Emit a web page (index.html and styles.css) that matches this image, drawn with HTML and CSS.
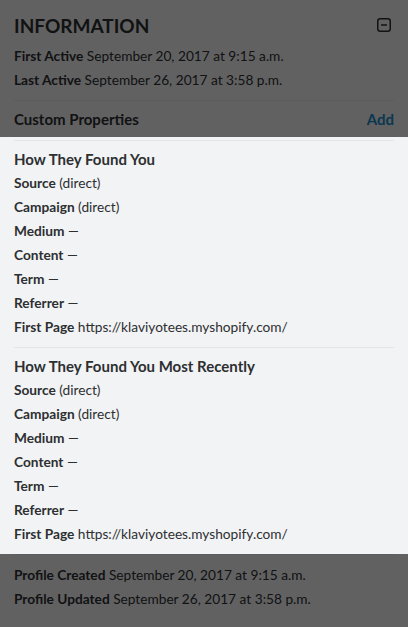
FILE: index.html
```html
<!DOCTYPE html>
<html>
<head>
<meta charset="utf-8">
<link rel="stylesheet" href="styles.css">
</head>
<body>
<div class="panel">
  <section class="block dim">
    <header class="head">
      <h2 class="title">INFORMATION</h2>
      <svg class="collapse" width="14" height="14" viewBox="0 0 14 14" aria-hidden="true">
        <rect x="0.75" y="0.75" width="12.5" height="12.5" rx="2.5" fill="none" stroke="#2d2f31" stroke-width="1.5"/>
        <line x1="4" y1="7" x2="10" y2="7" stroke="#2d2f31" stroke-width="1.5"/>
      </svg>
    </header>
    <div class="row"><b>First Active</b> September 20, 2017 at 9:15 a.m.</div>
    <div class="row"><b>Last Active</b> September 26, 2017 at 3:58 p.m.</div>
    <div class="props">
      <span class="props-label">Custom Properties</span>
      <a class="add">Add</a>
    </div>
  </section>

  <section class="block">
    <div class="group first">
      <h3 class="group-title">How They Found You</h3>
      <div class="row"><b>Source</b> (direct)</div>
      <div class="row"><b>Campaign</b> (direct)</div>
      <div class="row"><b>Medium</b> —</div>
      <div class="row"><b>Content</b> —</div>
      <div class="row"><b>Term</b> —</div>
      <div class="row"><b>Referrer</b> —</div>
      <div class="row"><b>First Page</b> https://klaviyotees.myshopify.com/</div>
    </div>
    <div class="group second">
      <h3 class="group-title">How They Found You Most Recently</h3>
      <div class="row"><b>Source</b> (direct)</div>
      <div class="row"><b>Campaign</b> (direct)</div>
      <div class="row"><b>Medium</b> —</div>
      <div class="row"><b>Content</b> —</div>
      <div class="row"><b>Term</b> —</div>
      <div class="row"><b>Referrer</b> —</div>
      <div class="row"><b>First Page</b> https://klaviyotees.myshopify.com/</div>
    </div>
  </section>

  <section class="block dim foot">
    <div class="meta">
      <div class="row"><b>Profile Created</b> September 20, 2017 at 9:15 a.m.</div>
      <div class="row"><b>Profile Updated</b> September 26, 2017 at 3:58 p.m.</div>
    </div>
  </section>
</div>
</body>
</html>
```

FILE: styles.css
```css
html, body {
  margin: 0;
  padding: 0;
  background: #f2f3f5;
}
body {
  font-family: Lato, "Open Sans", sans-serif;
  color: #2d2f31;
  font-size: 13.7px;
}
.panel {
  width: 408px;
  height: 627px;
  overflow: hidden;
  background: #f2f3f5;
}
.block {
  position: relative;
  padding: 0 14px;
}
.dim::after {
  content: "";
  position: absolute;
  inset: 0;
  background: rgba(0, 0, 0, 0.6);
  pointer-events: none;
}
.head {
  display: flex;
  align-items: center;
  justify-content: space-between;
  padding-top: 12px;
  margin-bottom: 4px;
  height: 28px;
}
.title {
  margin: 0;
  font-size: 19px;
  font-weight: 700;
  letter-spacing: 0;
  line-height: 28px;
}
.collapse {
  margin-right: 3px;
  margin-top: -2px;
}
.row {
  line-height: 24px;
  height: 24px;
  white-space: nowrap;
}
.row b {
  font-weight: 700;
}
.props {
  display: flex;
  justify-content: space-between;
  align-items: center;
  margin-top: 8px;
  border-top: 1px solid #e4e5e8;
  padding: 6px 0 6px;
  line-height: 24px;
  font-size: 15px;
  font-weight: 700;
}
.add {
  color: #1a8ac6;
  font-weight: 700;
}
.group {
  border-top: 1px solid #e4e5e8;
}
.group.first {
  margin-top: 3px;
}
.group.second {
  margin-top: 8px;
  padding-bottom: 5px;
}
.group-title {
  margin: 0;
  padding-top: 6px;
  font-size: 15px;
  font-weight: 700;
  line-height: 24px;
}
.foot {
  height: 74px;
}
.meta {
  margin-top: 3px;
  border-top: 1px solid #e4e5e8;
  padding-top: 8px;
}
```
